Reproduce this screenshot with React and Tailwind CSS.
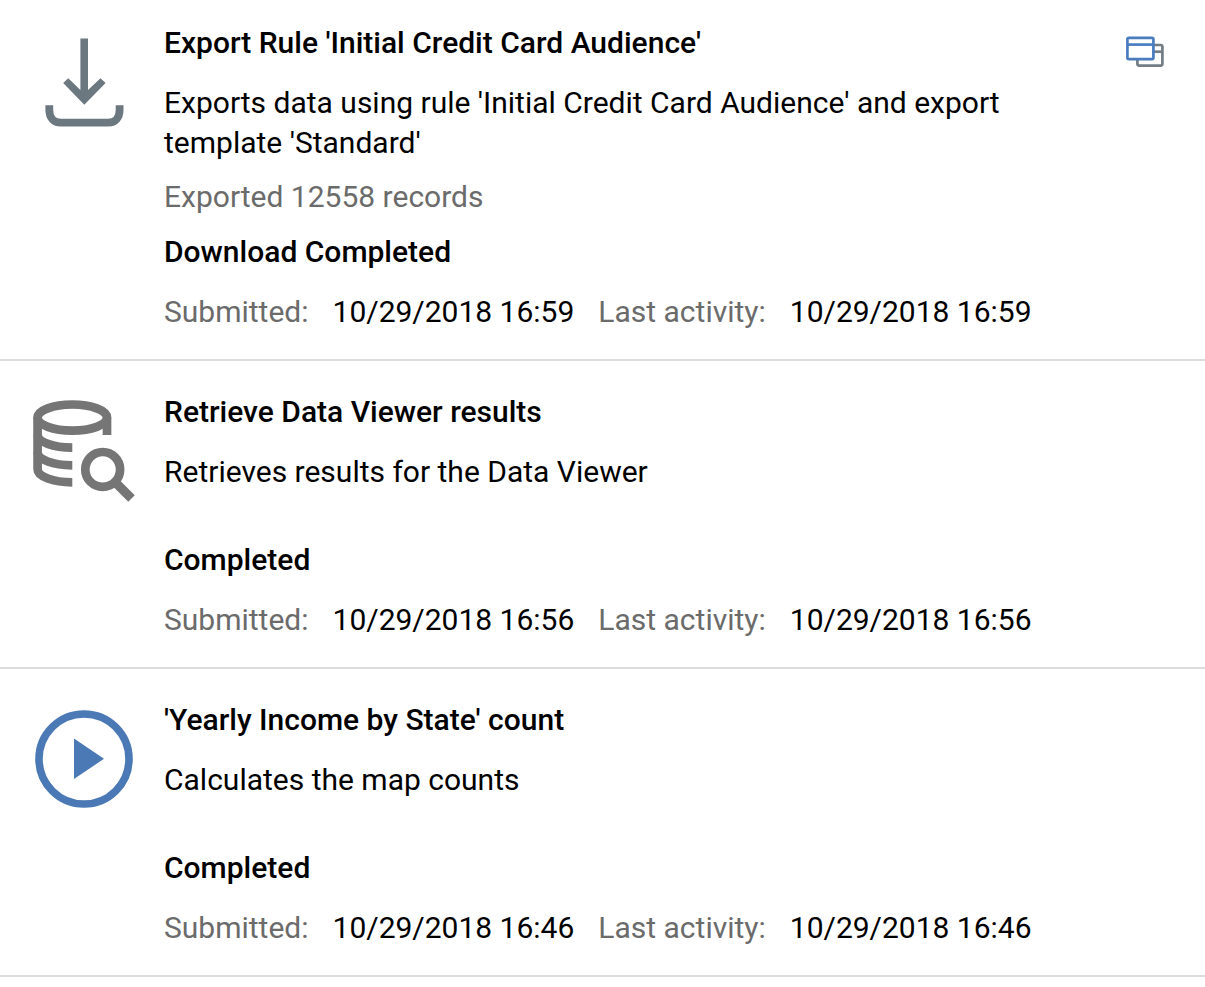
import React from 'react';

const ExportIcon = () => (
  <svg viewBox="0 0 104 104" fill="none" className="w-full h-full" aria-hidden="true">
    <path
      d="M48.4 8.5H56V60L68.5 48.3L73.6 53L52.3 74.7L31.2 53L36.2 48.3L48.4 60Z"
      fill="#6c7880"
    />
    <path
      d="M17.3 75.3V80C17.3 87.5 21.5 92.7 29 92.7H76C83.5 92.7 87.6 87.5 87.6 80V75.3"
      stroke="#6c7880"
      strokeWidth="7.8"
    />
  </svg>
);

const DataViewerIcon = () => (
  <svg viewBox="0 0 104 104" fill="none" stroke="#757575" strokeWidth="8.7" className="w-full h-full" aria-hidden="true">
    <ellipse cx="40.3" cy="18.6" rx="34.7" ry="13.1" />
    <path d="M75 18.6V36" />
    <path d="M5.6 18.6V70.3A34.7 13 0 0 0 40.3 83.3" />
    <path d="M5.6 35.7A34.7 13 0 0 0 40.3 48.7" />
    <path d="M5.6 53.3A34.7 13 0 0 0 40.3 66.3" />
    <circle cx="70.7" cy="70.4" r="17.4" />
    <path d="M82.5 82.5L99.5 99.4" strokeWidth="9.2" />
  </svg>
);

const PlayIcon = () => (
  <svg viewBox="0 0 104 104" fill="none" className="w-full h-full" aria-hidden="true">
    <circle cx="52" cy="52" r="45" stroke="#4a79b5" strokeWidth="7.6" />
    <path d="M42 31.6L72 51.8L42 72Z" fill="#4a79b5" />
  </svg>
);

const WindowsIcon = () => (
  <svg width="38" height="31" viewBox="0 0 38 31" fill="none" strokeWidth="2.7" aria-hidden="true">
    <g stroke="#727d85">
      <path d="M28 9H34.6C35.8 9 36.4 9.6 36.4 10.8V27.8C36.4 29 35.8 29.6 34.6 29.6H13.2C12 29.6 11.4 29 11.4 27.8V23.5" />
      <path d="M28 15.7H36.4" />
    </g>
    <g stroke="#4a7dc0">
      <rect x="1.4" y="1.9" width="26" height="21.2" rx="1.4" />
      <path d="M1.4 8.6H27.4" />
    </g>
  </svg>
);

const jobs = [
  {
    id: 1,
    icon: ExportIcon,
    title: "Export Rule 'Initial Credit Card Audience'",
    description: "Exports data using rule 'Initial Credit Card Audience' and export template 'Standard'",
    detail: 'Exported 12558 records',
    status: 'Download Completed',
    submitted: '10/29/2018 16:59',
    lastActivity: '10/29/2018 16:59',
    canOpen: true,
  },
  {
    id: 2,
    icon: DataViewerIcon,
    title: 'Retrieve Data Viewer results',
    description: 'Retrieves results for the Data Viewer',
    status: 'Completed',
    submitted: '10/29/2018 16:56',
    lastActivity: '10/29/2018 16:56',
  },
  {
    id: 3,
    icon: PlayIcon,
    title: "'Yearly Income by State' count",
    description: 'Calculates the map counts',
    status: 'Completed',
    submitted: '10/29/2018 16:46',
    lastActivity: '10/29/2018 16:46',
  },
];

const JobItem = ({ job }) => {
  const Icon = job.icon;

  return (
    <li className="flex items-start pl-8 pr-[41px] pt-[31px] first:pt-[23px] pb-[27px] border-b-2 border-[#dcdcdc]">
      <div className="w-26 h-26 mt-[7px] mr-7 shrink-0">
        <Icon />
      </div>

      <div className="flex-1 min-w-0">
        <h2 className="font-medium">{job.title}</h2>
        <p className="mt-5">{job.description}</p>
        {/* Keeps its height when there is no detail line */}
        <div className="min-h-12 text-[#6b6b6b]">
          {job.detail && <p className="pt-[14px] pb-[15px]">{job.detail}</p>}
        </div>
        <p className="font-medium">{job.status}</p>
        <dl className="mt-5 flex flex-wrap gap-x-6">
          <div className="flex gap-6">
            <dt className="text-[#6b6b6b]">Submitted:</dt>
            <dd>{job.submitted}</dd>
          </div>
          <div className="flex gap-6">
            <dt className="text-[#6b6b6b]">Last activity:</dt>
            <dd>{job.lastActivity}</dd>
          </div>
        </dl>
      </div>

      {job.canOpen && (
        <button type="button" aria-label="Open in window" className="mt-[13px] ml-5 shrink-0 cursor-pointer">
          <WindowsIcon />
        </button>
      )}
    </li>
  );
};

const App = () => {
  return (
    <main className="min-h-screen bg-white text-black text-[30px] leading-10 font-['Roboto',sans-serif]">
      <ul>
        {jobs.map((job) => (
          <JobItem key={job.id} job={job} />
        ))}
      </ul>
    </main>
  );
};

export default App;
